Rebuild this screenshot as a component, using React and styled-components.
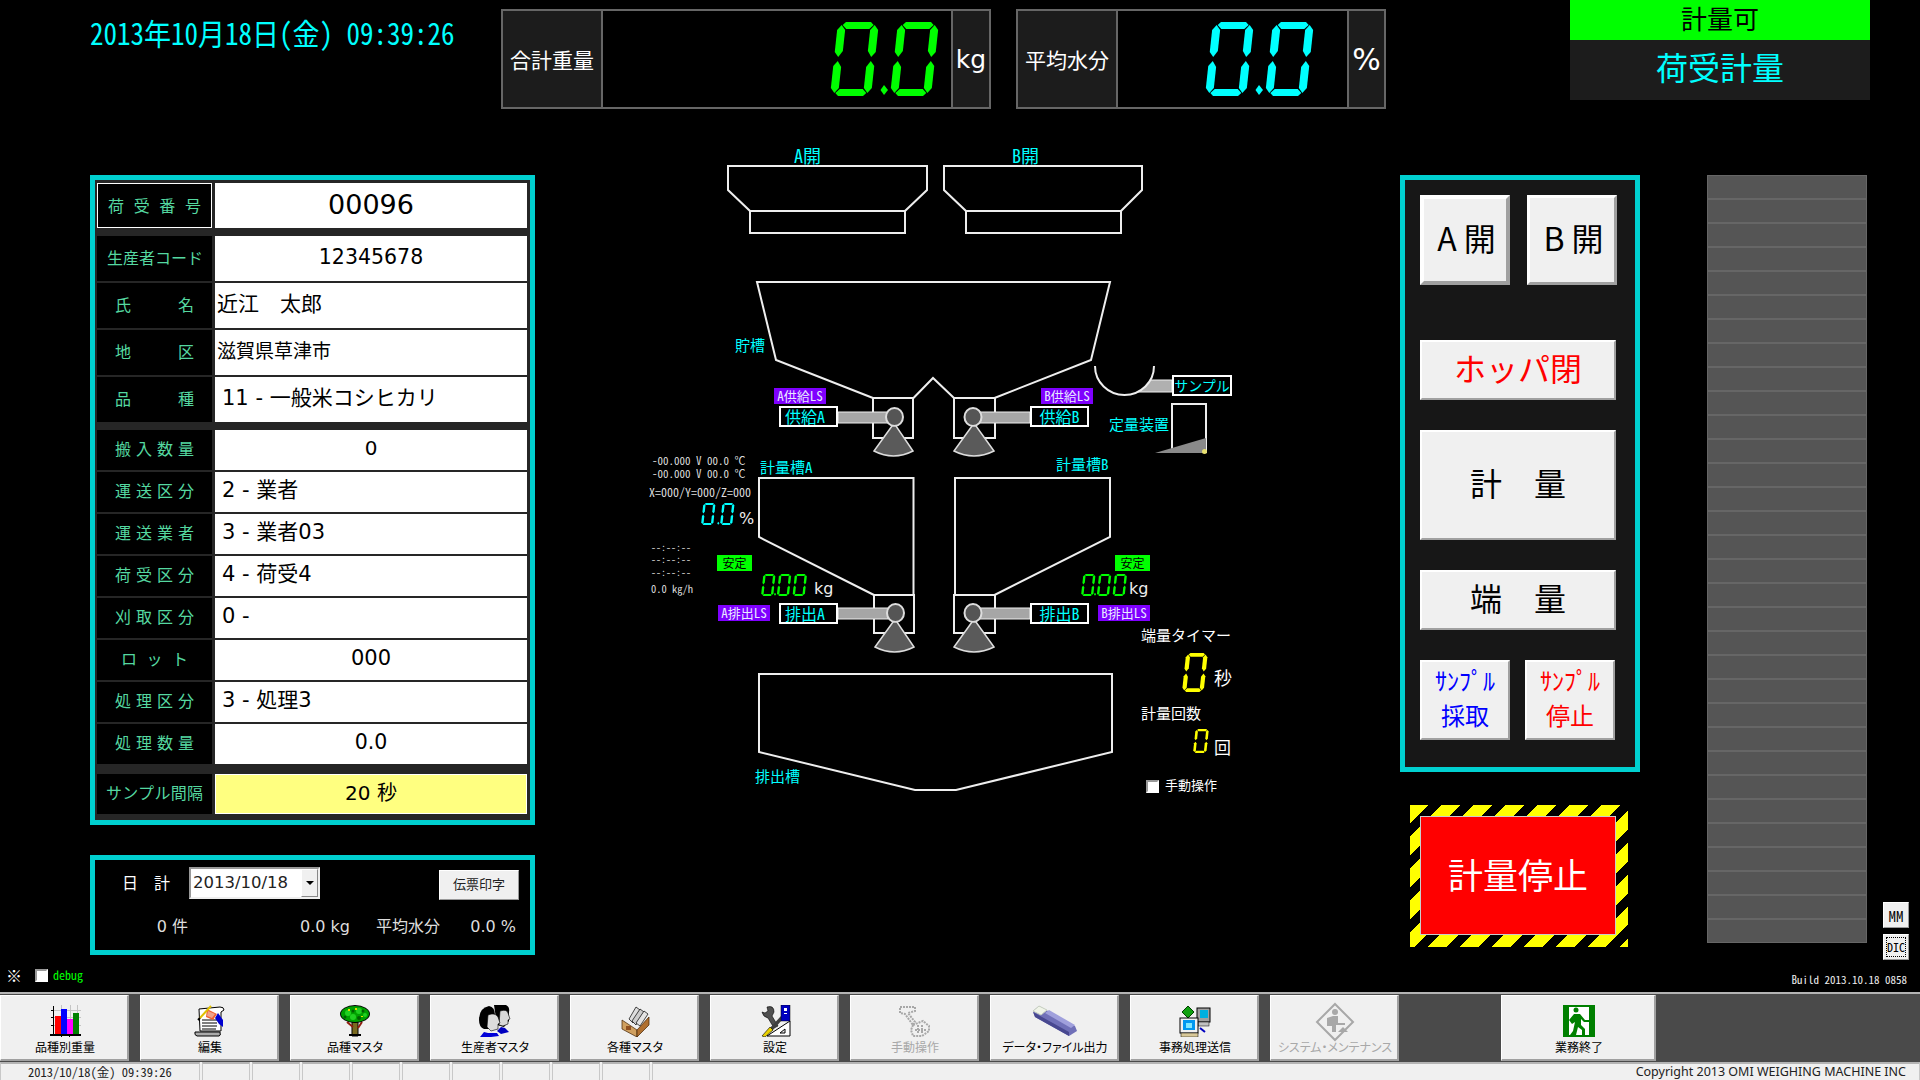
import React from "react";
import styled, { createGlobalStyle } from "styled-components";

const JP = `"Noto Sans CJK JP", sans-serif`;
const UI = `"DejaVu Sans", "Noto Sans CJK JP", sans-serif`;
const CYAN = "#00ffff";
const FRAME = "#00d0d0";

const Global = createGlobalStyle`
  html, body { margin: 0; background: #000; overflow: hidden; }
  #root { width: 1920px; height: 1080px; }
  * { box-sizing: border-box; }
`;

const Page = styled.div`
  width: 1920px; height: 1080px; background: #000; color: #fff;
  display: flex; flex-direction: column; font-family: ${JP};
  font-feature-settings: "hwid";
`;

/* ---------- header ---------- */
const Header = styled.header`
  height: 140px; flex: none; display: flex; align-items: flex-start; padding-left: 90px;
`;
const Clock = styled.div`
  width: 411px; padding-top: 14px; color: ${CYAN}; font-size: 30px; line-height: 36px; white-space: nowrap;
  & > span { display: inline-block; transform: scaleX(0.9); transform-origin: left center; }
`;
const Meter = styled.div`
  margin-top: 9px; margin-left: ${(p) => p.$ml}px; width: ${(p) => p.$w}px; height: 100px;
  display: grid; grid-template-columns: ${(p) => p.$cols};
  border: 2px solid #666;
`;
const MeterLabel = styled.div`
  background: #1c1c1c; border-right: 2px solid #666; display: flex; align-items: center; justify-content: center;
  font-size: 21px; color: #fff; white-space: nowrap;
`;
const MeterValue = styled.div`
  background: #000; border-right: 2px solid #666; display: flex; align-items: center; justify-content: flex-end;
  padding-right: ${(p) => p.$pr}px;
`;
const MeterUnit = styled.div`
  background: #1c1c1c; display: flex; align-items: center; justify-content: center;
  font-family: ${UI}; font-feature-settings: normal; font-size: ${(p) => p.$size}px; color: #fff;
`;
const StatusBlock = styled.div`
  margin-left: 184px; width: 300px; display: flex; flex-direction: column; background: #1c1c1c;
`;
const StatusReady = styled.div`
  height: 40px; background: #00ff00; color: #000; font-size: 26px; line-height: 35px; text-align: center;
`;
const StatusMode = styled.div`
  height: 60px; color: ${CYAN}; font-size: 32px; line-height: 53px; text-align: center;
`;

/* ---------- seven segment ---------- */
const SEG = {
  a: [[8, 0], [33, 0], [36, 3], [32, 7], [9, 7], [5, 3]],
  f: [[0, 8], [4, 3], [8, 8], [8, 29], [4, 35], [0, 30]],
  b: [[33, 8], [37, 3], [41, 8], [41, 30], [37, 35], [33, 29]],
  e: [[0, 44], [4, 39], [8, 45], [8, 66], [4, 71], [0, 66]],
  c: [[33, 45], [37, 39], [41, 44], [41, 66], [37, 71], [33, 66]],
  d: [[9, 67], [32, 67], [36, 71], [33, 74], [8, 74], [5, 71]],
  g: [[8, 34], [33, 34], [36, 37], [33, 40], [8, 40], [5, 37]],
};
const DIGITS = { 0: "abcdef", 1: "bc", 2: "abdeg", 3: "abcdg", 4: "bcfg", 5: "acdfg", 6: "acdefg", 7: "abc", 8: "abcdefg", 9: "abcdfg" };
const slant = ([x, y], ox) => `${x + ox + 8 * (1 - y / 74)},${y}`;

function SevenSeg({ value, height, color, pitch = 60, className }) {
  const chars = value.replace(".", "").split("");
  const dotAt = value.indexOf(".");
  const vbW = pitch * (chars.length - 1) + 49;
  return (
    <svg className={className} width={(vbW * height) / 74} height={height} viewBox={`0 0 ${vbW} 74`} style={{ display: "block", flex: "none" }}>
      {chars.map((c, i) =>
        DIGITS[c].split("").map((s) => (
          <polygon key={`${i}${s}`} points={SEG[s].map((pt) => slant(pt, i * pitch)).join(" ")} fill={color} />
        ))
      )}
      {dotAt > 0 && (
        <polygon
          points={`${pitch * dotAt - 6},63 ${pitch * dotAt - 2},68 ${pitch * dotAt - 6},73 ${pitch * dotAt - 9.5},68`}
          fill={color}
        />
      )}
    </svg>
  );
}

/* ---------- main ---------- */
const Main = styled.main`
  height: 825px; flex: none; display: flex; padding-left: 90px;
`;
const LeftColumn = styled.section`
  width: 445px; flex: none; padding-top: 35px; display: flex; flex-direction: column; gap: 30px;
`;
const EntryPanel = styled.div`
  height: 650px; border: 5px solid ${FRAME}; background: #262626; padding: 3px 3px 0 2px;
`;
const EntryRow = styled.div`
  display: grid; grid-template-columns: 115px 312px; column-gap: 3px;
  height: ${(p) => p.$h}px; margin-top: ${(p) => p.$mt}px;
`;
const EntryLabel = styled.div`
  background: #000; color: #55d8a0; font-size: 16px; line-height: ${(p) => p.$h - 3}px;
  padding: 0 ${(p) => p.$inset}px; text-align: justify; text-align-last: justify; white-space: nowrap;
  font-feature-settings: normal; overflow: hidden;
  border: ${(p) => (p.$focus ? "1px solid #fff" : "none")};
`;
const EntryValue = styled.div`
  background: ${(p) => (p.$yellow ? "#ffff80" : "#fff")}; color: #000; font-family: ${UI}; font-feature-settings: normal;
  border: ${(p) => (p.$yellow ? "1px solid #fff" : "none")};
  font-size: ${(p) => p.$size}px; line-height: ${(p) => (p.$h > 40 ? p.$h - 2 : p.$h - 4)}px; white-space: pre;
  text-align: ${(p) => (p.$center ? "center" : "left")}; padding-left: ${(p) => p.$indent}px;
`;

const SummaryPanel = styled.div`
  height: 100px; border: 5px solid ${FRAME}; background: #000; padding: 7px 0 0 27px;
`;
const SummaryTop = styled.div`
  display: flex; align-items: flex-start; height: 40px;
`;
const SummaryTitle = styled.div`
  width: 67px; margin-top: 3px; font-size: 16px; line-height: 24px; white-space: pre; color: #fff; font-feature-settings: normal;
`;
const DateCombo = styled.div`
  width: 131px; height: 32px; display: flex; background: #fff; border: 2px solid; border-color: #999 #eee #eee #999;
`;
const DateText = styled.div`
  flex: 1; color: #222; font-family: ${UI}; font-feature-settings: normal; font-size: 16.5px; line-height: 28px; padding-left: 2px; white-space: nowrap;
`;
const DateArrow = styled.div`
  width: 17px; background: #f0f0f0; border: 1px solid; border-color: #fff #888 #888 #fff;
  display: flex; align-items: center; justify-content: center;
  &::after { content: ""; border-left: 4px solid transparent; border-right: 4px solid transparent; border-top: 4px solid #000; }
`;
const SlipButton = styled.button`
  margin-left: 119px; margin-top: 3px; width: 80px; height: 30px; padding: 0 0 2px; background: #f0f0f0; color: #222;
  border: 1px solid; border-color: #fff #999 #999 #fff; font-family: ${JP}; font-size: 13px; line-height: 24px;
`;
const SummaryBottom = styled.div`
  margin-left: -27px; display: grid; grid-template-columns: 93px 162px 90px 76px; margin-top: 8px;
  font-family: ${UI}; font-feature-settings: normal; font-size: 16px; line-height: 24px; color: #ddd;
  & > span { text-align: right; white-space: nowrap; }
`;

/* ---------- diagram ---------- */
const Diagram = styled.section`
  position: relative; width: 620px; height: 670px; margin-left: 105px; flex: none;
  & > svg:first-child { display: block; }
`;
const CanvasText = styled.span`
  position: absolute; left: ${(p) => p.$x - 640}px; top: ${(p) => p.$y - 140}px; line-height: 1; white-space: pre;
`;
const ZoneLabel = styled(CanvasText)`color: ${CYAN}; font-size: ${(p) => p.$size || 15}px;`;
const WhiteLabel = styled(CanvasText)`color: #fff; font-size: ${(p) => p.$size || 15}px;`;
const TinyReadout = styled(CanvasText)`color: #ddd; font-size: ${(p) => p.$size || 11}px;`;
const UnitLabel = styled(CanvasText)`color: #eee; font-size: 16px; font-family: ${UI}; font-feature-settings: normal;`;
const LsBadge = styled(CanvasText)`
  width: 52px; height: 16px; background: #7f00ff; color: #e8e8ff; font-size: 13px; line-height: 15px; text-align: center;
`;
const StableBadge = styled(CanvasText)`
  width: 35px; height: 16px; background: #00ff00; color: #000; font-size: 12px; line-height: 16px; text-align: center;
`;
const ActuatorBox = styled(CanvasText)`
  width: ${(p) => p.$w || 59}px; height: ${(p) => p.$hh || 21}px; border: 2px solid #fff; background: #000; color: ${CYAN};
  font-size: ${(p) => p.$size || 16}px; line-height: 16px; text-align: ${(p) => (p.$left ? "left" : "center")};
  padding-left: ${(p) => (p.$left ? 4 : 0)}px;
`;
const PlacedDigits = styled(SevenSeg)`
  position: absolute; left: ${(p) => p.$x - 640}px; top: ${(p) => p.$y - 140}px;
`;
const ManualBox = styled.span`
  position: absolute; left: 506px; top: 640px; width: 13px; height: 13px; background: #fff; border: 2px solid; border-color: #999 #fff #fff #999;
`;

const Line = styled.g`
  fill: none; stroke: #eee; stroke-width: 2;
`;

function Valve({ box, boxY, boxH, rodX, rodW, rodY, cx, cy, fanTop, fanL, fanR, fanY }) {
  const mid = (fanL + fanR) / 2;
  return (
    <g>
      <Line><rect x={box} y={boxY} width={fanR - fanL + 1} height={boxH} /></Line>
      <rect x={rodX} y={rodY} width={rodW} height={11} fill="#a6a6a6" stroke="#eee" strokeWidth="1" />
      <ellipse cx={cx} cy={cy} rx="8.5" ry="9" fill="#555" stroke="#ddd" strokeWidth="2" />
      <path
        d={`M${fanTop - 2},${cy + 9} L${fanL},${fanY} Q${mid},${fanY + 10} ${fanR},${fanY} L${fanTop + 2},${cy + 9} Z`}
        fill="#5a5a5a" stroke="#ddd" strokeWidth="1.5"
      />
    </g>
  );
}

function PlantDrawing() {
  return (
    <svg width="620" height="670" viewBox="640 140 620 670">
      <Line>
        <polygon points="728,166 927,166 927,190 905,211 905,233 750,233 750,211 728,190" />
        <line x1="750" y1="211" x2="905" y2="211" />
        <polygon points="944,166 1142,166 1142,190 1121,211 1121,233 966,233 966,211 944,190" />
        <line x1="966" y1="211" x2="1121" y2="211" />
        <polyline points="873,398 776,360 757,282 1110,282 1091,360 994.5,398" />
        <polyline points="913.5,398 933,378 954,398" />
        <polyline points="874,595 759,537 759,478 913.5,478 913.5,595" />
        <polyline points="994.5,595 1110,537 1110,478 955,478 955,595" />
        <polygon points="759,674 1112,674 1112,752 956,790 915,790 759,752" />
        <path d="M1172,453 L1172,404 L1206,404 L1206,453" />
      </Line>
      <Valve box={873} boxY={398} boxH={40} rodX={838} rodW={50} rodY={412} cx={894.5} cy={417} fanTop={894} fanL={874} fanR={913} fanY={451} />
      <Valve box={954} boxY={398} boxH={40} rodX={980} rodW={50} rodY={412} cx={973} cy={417} fanTop={974} fanL={954} fanR={994} fanY={451} />
      <Valve box={874} boxY={595} boxH={38} rodX={838} rodW={50} rodY={608} cx={895.5} cy={613} fanTop={895} fanL={875} fanR={914} fanY={647} />
      <Valve box={954} boxY={595} boxH={38} rodX={980} rodW={50} rodY={608} cx={973} cy={613} fanTop={974} fanL={954} fanR={994} fanY={647} />
      <rect x="1125" y="380" width="47" height="12" fill="#b0b0b0" stroke="#eee" strokeWidth="1" />
      <path d="M1095,366 A29.5,29 0 0 0 1154,366 Z" fill="#000" stroke="none" />
      <path d="M1095,366 A29.5,29 0 0 0 1154,366" fill="none" stroke="#eee" strokeWidth="2" />
      <polygon points="1155,453 1206,438 1206,453" fill="#8a8a8a" />
      <circle cx="1204.5" cy="451.5" r="2.5" fill="#e8e070" />
    </svg>
  );
}

/* ---------- right ---------- */
const RightColumn = styled.section`
  width: 240px; margin-left: 140px; flex: none; padding-top: 35px; display: flex; flex-direction: column;
`;
const ControlPanel = styled.div`
  height: 597px; border: 5px solid ${FRAME}; background: #171717; padding: 15px;
  display: flex; flex-direction: column;
`;
const ButtonPair = styled.div`
  display: flex; gap: ${(p) => p.$gap}px; margin-top: ${(p) => p.$mt || 0}px;
`;
const ControlButton = styled.button`
  width: ${(p) => p.$w || 196}px; height: ${(p) => p.$h}px; margin-top: ${(p) => p.$mt || 0}px; flex: none;
  padding: 0 0 5px ${(p) => p.$pl || 0}px;
  background: #f0f0f0; color: ${(p) => p.$color || "#000"}; font-family: ${JP};
  font-size: ${(p) => p.$size || 32}px; line-height: ${(p) => p.$lh || 1.2};
  border-style: solid; border-width: ${(p) => p.$bevel || 2}px; border-color: #fff #a0a0a0 #a0a0a0 #fff;
  white-space: pre; font-feature-settings: ${(p) => (p.$narrow ? '"hwid"' : "normal")};
`;
const StopFrame = styled.div`
  margin-top: 33px; margin-left: 10px; width: 218px; height: 142px; padding: 11px 12px 12px 10px;
  background: repeating-linear-gradient(135deg, #ffff00 0 13px, #000 13px 22.6px);
`;
const StopButton = styled.button`
  width: 100%; height: 100%; padding: 0 0 4px; background: #ff0000; color: #fff; border: 1px solid #ccc;
  font-family: ${JP}; font-size: 35px;
`;
const Gauge = styled.div`
  margin-left: 67px; margin-top: 35px; width: 160px; height: 768px; flex: none; background: #555; border: 1px solid #666;
  display: flex; flex-direction: column; overflow: hidden;
`;
const GaugeSegment = styled.div`
  height: 24px; flex: none; background: #555; border-bottom: 2px solid #666;
`;
const SideButtons = styled.div`
  margin-left: 16px; margin-top: 762px; width: 26px; flex: none; display: flex; flex-direction: column; gap: 6px;
`;
const SideButton = styled.button`
  width: 26px; height: 26px; padding: 0; background: #f0f0f0; color: #000; font-family: ${JP}; font-size: ${(p) => p.$size}px; line-height: 1;
  border: 1px solid; border-color: #fff #999 #999 #fff; outline: ${(p) => (p.$focus ? "1px dotted #000" : "none")};
  outline-offset: -4px; font-feature-settings: "hwid";
`;

/* ---------- foot ---------- */
const FootRow = styled.div`
  height: 27px; flex: none; display: flex; align-items: center; padding: 0 13px 0 6px;
`;
const FootLeft = styled.div`
  display: flex; align-items: center; margin-bottom: 8px;
`;
const Mark = styled.span`color: #fff; font-size: 16px; width: 29px; font-feature-settings: normal;`;
const DebugBox = styled.span`
  width: 13px; height: 13px; background: #fff; border: 2px solid; border-color: #999 #fff #fff #999; margin-right: 5px; margin-top: 2px;
`;
const DebugText = styled.span`color: #00ff00; font-size: 12px;`;
const BuildText = styled.span`margin-left: auto; color: #eee; font-size: 11px;`;

/* ---------- toolbar ---------- */
const Toolbar = styled.nav`
  height: 70px; flex: none; background: #4a4a4a; border-top: 2px solid #b4b4b4; padding-top: 1px; display: flex;
`;
const ToolButton = styled.button`
  width: ${(p) => p.$w || 129}px; margin-left: ${(p) => p.$ml ?? 11}px; height: 66px; flex: none; padding: 9px 0 0 2px;
  background: #f0f0f0; border-style: solid; border-width: 1px 2px 2px 1px; border-color: #fff #a0a0a0 #a0a0a0 #fff;
  display: flex; flex-direction: column; align-items: center; gap: 3px;
  color: ${(p) => (p.disabled ? "#a8a8a8" : "#000")}; font-family: ${JP}; font-size: 12px; line-height: 13px;
  font-feature-settings: "palt"; white-space: nowrap;
`;
const StatusBar = styled.footer`
  height: 18px; flex: none; background: #f0f0f0; display: flex; gap: 2px; color: #222;
`;
const StatusCell = styled.div`
  width: ${(p) => p.$w}px; flex: ${(p) => (p.$grow ? 1 : "none")}; border-top: 2px solid #b4b4b4; border-left: 1px solid #c8c8c8; border-right: 1px solid #c8c8c8;
  font-size: 12.5px; line-height: 15px; white-space: nowrap; display: flex; padding: 0 13px 0 27px;
  justify-content: ${(p) => (p.$grow ? "flex-end" : "flex-start")};
`;
const Copyright = styled.span`font-family: "Noto Sans", sans-serif; font-feature-settings: normal; font-size: 12.5px;`;

/* ---------- icons ---------- */
const Ico = ({ children }) => <svg width="32" height="32" viewBox="0 0 32 32">{children}</svg>;
const ChartIcon = () => (
  <Ico>
    <g fill="#c4c4c4"><rect x="3" y="5" width="29" height="1" /><rect x="3" y="12" width="29" height="1" /><rect x="3" y="20" width="29" height="1" /><rect x="12" y="0" width="1" height="29" /><rect x="21" y="0" width="1" height="29" /><rect x="28" y="0" width="1" height="29" /></g>
    <rect x="6" y="11" width="6" height="18" fill="#ff0000" />
    <rect x="12" y="4" width="6" height="25" fill="#0000ff" />
    <rect x="18" y="14" width="6" height="15" fill="#ff00ff" />
    <rect x="24" y="8" width="6" height="21" fill="#008000" />
    <rect x="4" y="1" width="1" height="30" fill="#000" />
    <rect x="1" y="29" width="31" height="2" fill="#000" />
    <g fill="#000"><rect x="2" y="5" width="2" height="1" /><rect x="2" y="12" width="2" height="1" /><rect x="2" y="20" width="2" height="1" /><rect x="12" y="31" width="1" height="1" /><rect x="20" y="31" width="1" height="1" /></g>
  </Ico>
);
const ScrollIcon = () => (
  <Ico>
    <path d="M5,4 L26,2 Q30,2 30,5 L27,7 L27,26 L6,26 Z" fill="#fff" stroke="#000" />
    <path d="M1,27 L26,27 Q27,31 25,31 L3,31 Q0,30 1,27 Z" fill="#aaa" stroke="#000" />
    <g stroke="#000"><line x1="8" y1="15" x2="23" y2="15" /><line x1="8" y1="18" x2="23" y2="18" /><line x1="8" y1="21" x2="23" y2="21" /><line x1="8" y1="24" x2="22" y2="24" /></g>
    <polygon points="13,4 23,9 19,15 12,12" fill="#f06030" />
    <polygon points="14,6 21,9 18,13 13,11" fill="#f0c0b0" opacity="0.7" />
    <polygon points="24,8 29,15 29,22 25,19 21,13" fill="#0000d0" />
    <line x1="6" y1="13" x2="17" y2="1" stroke="#e0c000" strokeWidth="2" />
    <line x1="6" y1="13" x2="4" y2="15" stroke="#000" strokeWidth="2" />
  </Ico>
);
const TreeIcon = () => (
  <Ico>
    <polygon points="13,17 19,17 19,31 13,31" fill="#7a6a20" stroke="#000" strokeWidth="1" />
    <path d="M8,17 L14,22 M23,17 L19,23" stroke="#902010" strokeWidth="2" />
    <rect x="10" y="29" width="12" height="2" fill="#000" />
    <ellipse cx="16" cy="9" rx="15" ry="9" fill="#000" />
    <ellipse cx="16" cy="9" rx="14" ry="8" fill="#00a000" />
    <g fill="#20d020"><circle cx="9" cy="8" r="3" /><circle cx="20" cy="6" r="3" /><circle cx="26" cy="10" r="2" /><circle cx="14" cy="12" r="3" /></g>
    <g fill="#006000"><circle cx="14" cy="6" r="1.5" /><circle cx="24" cy="6" r="1.5" /><circle cx="6" cy="12" r="1.5" /><circle cx="20" cy="13" r="2" /></g>
    <g fill="#e0e000"><rect x="9" y="4" width="2" height="2" /><rect x="16" y="3" width="2" height="2" /><rect x="22" y="11" width="2" height="1" /></g>
  </Ico>
);
const PeopleIcon = () => (
  <Ico>
    <path d="M15,0 L27,0 Q31,2 30,7 L30,16 L25,22 L18,20 Z" fill="#000" />
    <path d="M21,6 Q28,4 29,8 L31,14 L29,15 L29,19 L24,21 L20,20 Z" fill="#d8d8d8" stroke="#000" strokeWidth="0.6" />
    <path d="M18,26 L22,22 L26,23 L30,27 L22,29 Z" fill="#0000c0" />
    <path d="M10,1 Q0,3 0,15 Q0,22 5,24 L13,24 L16,10 Q16,2 10,1 Z" fill="#000" />
    <path d="M9,10 Q16,7 19,12 L21,18 L19,19 L19,24 L12,26 L8,22 Z" fill="#dcdcdc" stroke="#000" strokeWidth="0.6" />
    <path d="M1,32 L5,27 L9,28 L13,28 L18,28 L20,31 L12,32 Z" fill="#0000d8" />
  </Ico>
);
const BoxIcon = () => (
  <Ico>
    <g stroke="#000" strokeWidth="0.7"><polygon points="10,14 17,2 21,5 14,18" fill="#ddd" /><polygon points="13,16 21,4 25,7 17,20" fill="#ccc" /><polygon points="17,18 25,6 29,9 21,21" fill="#e4e4e4" /></g>
    <polygon points="3,15 18,25 18,32 3,24" fill="#d0a060" stroke="#402000" strokeWidth="0.7" />
    <polygon points="18,25 30,12 30,20 18,32" fill="#b07030" stroke="#402000" strokeWidth="0.7" />
    <rect x="7" y="21" width="5" height="4" fill="#905020" />
  </Ico>
);
const ToolsIcon = () => (
  <Ico>
    <polygon points="31,16 31,31 8,31" fill="#fff" stroke="#000" />
    <polygon points="26,24 26,28 21,28" fill="#f0f0f0" stroke="#000" />
    <path d="M8,2 Q15,0 15,7 L13,11 L19,21 L15,23 L9,13 Q4,12 3,7 L6,8 L9,6 Z" fill="#505050" stroke="#000" strokeWidth="0.6" />
    <polygon points="22,11 10,24 13,26 24,14" fill="#404040" />
    <polygon points="11,22 3,31 6,32 14,25" fill="#e8d000" stroke="#000" strokeWidth="0.6" />
    <rect x="22" y="0" width="9" height="16" fill="#0000c0" stroke="#000" strokeWidth="0.5" />
    <rect x="25" y="3" width="3" height="3" fill="#fff" /><rect x="25" y="8" width="3" height="1" fill="#fff" />
  </Ico>
);
const HandIcon = () => (
  <Ico>
    <g fill="none" stroke="#a8a8a8" strokeWidth="2" strokeDasharray="2 1">
      <path d="M1,2 L16,2 L16,6 L9,8 L16,17 L14,20 L6,9 L1,8 Z" />
      <path d="M14,20 L24,16 L30,21 L30,26 L23,31 L14,31 L12,25 Z" />
      <path d="M19,20 L19,29 M23,20 L23,29 M16,25 L27,25" />
    </g>
  </Ico>
);
const UsbIcon = () => (
  <svg width="48" height="32" viewBox="0 0 48 32">
    <polygon points="2,6 8,1 44,21 46,26 38,31 4,12" fill="#7070b8" />
    <polygon points="2,6 8,1 16,5 10,10" fill="#f0f4e8" stroke="#c8d0c0" />
    <polygon points="14,8 18,5 44,20 40,23" fill="#a0a0dc" />
    <polygon points="4,12 38,31 38,27 2,7" fill="#484890" />
  </svg>
);
const PcIcon = () => (
  <Ico>
    <rect x="18" y="3" width="13" height="14" fill="#a0a0a0" stroke="#000" />
    <rect x="21" y="5" width="8" height="8" fill="#00b0e0" />
    <rect x="19" y="17" width="11" height="4" fill="#c0c0c0" stroke="#000" strokeWidth="0.5" />
    <polygon points="3,7 9,1 15,7 9,13" fill="#10a010" stroke="#004000" />
    <rect x="1" y="13" width="18" height="15" fill="#f0f0f0" stroke="#000" />
    <rect x="4" y="15" width="12" height="10" fill="#0098f0" />
    <rect x="7" y="18" width="6" height="5" fill="#80e8ff" />
    <rect x="2" y="28" width="17" height="4" fill="#d8c898" stroke="#000" strokeWidth="0.5" />
    <path d="M21,23 L26,27" stroke="#0000c0" strokeWidth="2" />
  </Ico>
);
const MaintenanceIcon = () => (
  <svg width="40" height="40" viewBox="0 0 40 40" style={{ marginTop: -3, marginBottom: -5 }}>
    <polygon points="20,2 38,20 20,38 2,20" fill="none" stroke="#a8a8a8" strokeWidth="2" />
    <circle cx="20" cy="10" r="3" fill="#a8a8a8" />
    <path d="M12,16 L18,14 L23,14 L23,21 L30,21 L30,23 L21,23 L21,30 L17,30 L17,24 L12,24 Z" fill="#a8a8a8" />
    <polygon points="23,30 28,25 33,30" fill="#a8a8a8" />
  </svg>
);
const ExitIcon = () => (
  <Ico>
    <rect x="0" y="0" width="32" height="32" fill="#008000" />
    <rect x="6" y="2" width="20" height="28" fill="#fff" />
    <circle cx="13" cy="5" r="2.5" fill="#008000" />
    <path d="M11,9 L17,9 L22,15 L28,15 L28,17 L21,17 L18,14 L18,20 L22,24 L22,30 L19,30 L19,25 L15,22 L13,30 L7,30 L10,26 L12,17 L9,19 L6,15 Z" fill="#008000" />
  </Ico>
);

/* ---------- data ---------- */
const groupA = [
  { label: "荷受番号", value: "00096", h: 45, mt: 0, inset: 10, size: 27, center: true, focus: true },
  { label: "生産者コード", value: "12345678", h: 45, mt: 8, inset: 10, size: 20.5, center: true },
  { label: "氏名", value: "近江　太郎", h: 45, mt: 2, inset: 18, size: 21, indent: 2 },
  { label: "地区", value: "滋賀県草津市", h: 45, mt: 2, inset: 18, size: 19, indent: 2 },
  { label: "品種", value: "11 - 一般米コシヒカリ", h: 45, mt: 2, inset: 18, size: 21, indent: 7 },
  { label: "搬入数量", value: "0", h: 40, mt: 8, inset: 18, size: 20, center: true },
  { label: "運送区分", value: "2 - 業者", h: 40, mt: 2, inset: 18, size: 21, indent: 7 },
  { label: "運送業者", value: "3 - 業者03", h: 40, mt: 2, inset: 18, size: 21, indent: 7 },
  { label: "荷受区分", value: "4 - 荷受4", h: 40, mt: 2, inset: 18, size: 21, indent: 7 },
  { label: "刈取区分", value: "0 -", h: 40, mt: 2, inset: 18, size: 21, indent: 7 },
  { label: "ロット", value: "000", h: 40, mt: 2, inset: 24, size: 21, center: true },
  { label: "処理区分", value: "3 - 処理3", h: 40, mt: 2, inset: 18, size: 21, indent: 7 },
  { label: "処理数量", value: "0.0", h: 40, mt: 2, inset: 18, size: 20.5, center: true },
  { label: "サンプル間隔", value: "20 秒", h: 40, mt: 10, inset: 9, size: 20, center: true, yellow: true },
];

const tools = [
  { label: "品種別重量", icon: <ChartIcon />, ml: 0 },
  { label: "編集", icon: <ScrollIcon />, w: 139 },
  { label: "品種マスタ", icon: <TreeIcon /> },
  { label: "生産者マスタ", icon: <PeopleIcon /> },
  { label: "各種マスタ", icon: <BoxIcon /> },
  { label: "設定", icon: <ToolsIcon /> },
  { label: "手動操作", icon: <HandIcon />, disabled: true },
  { label: "データ・ファイル出力", icon: <UsbIcon /> },
  { label: "事務処理送信", icon: <PcIcon /> },
  { label: "システム・メンテナンス", icon: <MaintenanceIcon />, disabled: true },
  { label: "業務終了", icon: <ExitIcon />, w: 155, ml: 102 },
];

export default function App() {
  return (
    <Page>
      <Global />
      <Header>
        <Clock><span>2013年10月18日(金) 09:39:26</span></Clock>
        <Meter $ml={0} $w={490} $cols="100px 350px 36px">
          <MeterLabel>合計重量</MeterLabel>
          <MeterValue $pr={12}><SevenSeg value="0.0" height={74} color="#00ff00" /></MeterValue>
          <MeterUnit $size={25}>kg</MeterUnit>
        </Meter>
        <Meter $ml={25} $w={370} $cols="100px 231px 35px">
          <MeterLabel>平均水分</MeterLabel>
          <MeterValue $pr={33}><SevenSeg value="0.0" height={74} color="#00ffff" /></MeterValue>
          <MeterUnit $size={30}>%</MeterUnit>
        </Meter>
        <StatusBlock>
          <StatusReady>計量可</StatusReady>
          <StatusMode>荷受計量</StatusMode>
        </StatusBlock>
      </Header>

      <Main>
        <LeftColumn>
          <EntryPanel>
            {groupA.map((r) => (
              <EntryRow key={r.label} $h={r.h} $mt={r.mt}>
                <EntryLabel $h={r.h} $inset={r.inset} $focus={r.focus}>{r.label}</EntryLabel>
                <EntryValue $h={r.h} $size={r.size} $center={r.center} $indent={r.indent || 0} $yellow={r.yellow}>{r.value}</EntryValue>
              </EntryRow>
            ))}
          </EntryPanel>
          <SummaryPanel>
            <SummaryTop>
              <SummaryTitle>日　計</SummaryTitle>
              <DateCombo>
                <DateText>2013/10/18</DateText>
                <DateArrow />
              </DateCombo>
              <SlipButton>伝票印字</SlipButton>
            </SummaryTop>
            <SummaryBottom>
              <span>0 件</span>
              <span>0.0 kg</span>
              <span>平均水分</span>
              <span>0.0 %</span>
            </SummaryBottom>
          </SummaryPanel>
        </LeftColumn>

        <Diagram>
          <PlantDrawing />
          <ZoneLabel $x={794} $y={146} $size={18}>A開</ZoneLabel>
          <ZoneLabel $x={1012} $y={146} $size={18}>B開</ZoneLabel>
          <ZoneLabel $x={735} $y={337}>貯槽</ZoneLabel>
          <LsBadge $x={774} $y={388}>A供給LS</LsBadge>
          <LsBadge $x={1041} $y={388}>B供給LS</LsBadge>
          <ActuatorBox $x={779} $y={406} $left>供給A</ActuatorBox>
          <ActuatorBox $x={1030} $y={406}>供給B</ActuatorBox>
          <ActuatorBox $x={1172} $y={375} $w={60} $size={14}>サンプル</ActuatorBox>
          <ZoneLabel $x={1109} $y={416}>定量装置</ZoneLabel>

          <TinyReadout $x={652} $y={455}>-00.000 V 00.0 ℃</TinyReadout>
          <TinyReadout $x={652} $y={468}>-00.000 V 00.0 ℃</TinyReadout>
          <TinyReadout $x={649} $y={486} $size={12}>X=000/Y=000/Z=000</TinyReadout>
          <PlacedDigits $x={701} $y={503} value="0.0" height={22} pitch={64} color="#00ffff" />
          <UnitLabel $x={739} $y={511}>%</UnitLabel>
          <TinyReadout $x={651} $y={542} $size={10}>--:--:--</TinyReadout>
          <TinyReadout $x={651} $y={554} $size={10}>--:--:--</TinyReadout>
          <TinyReadout $x={651} $y={567} $size={10}>--:--:--</TinyReadout>
          <TinyReadout $x={651} $y={584} $size={10.5}>0.0 kg/h</TinyReadout>

          <ZoneLabel $x={760} $y={459}>計量槽A</ZoneLabel>
          <ZoneLabel $x={1056} $y={456}>計量槽B</ZoneLabel>
          <StableBadge $x={717} $y={555}>安定</StableBadge>
          <StableBadge $x={1115} $y={555}>安定</StableBadge>
          <PlacedDigits $x={761} $y={574} value="0.00" height={22} pitch={53} color="#00ff00" />
          <PlacedDigits $x={1081} $y={574} value="0.00" height={22} pitch={53} color="#00ff00" />
          <UnitLabel $x={814} $y={581}>kg</UnitLabel>
          <UnitLabel $x={1129} $y={581}>kg</UnitLabel>
          <LsBadge $x={718} $y={605}>A排出LS</LsBadge>
          <LsBadge $x={1098} $y={605}>B排出LS</LsBadge>
          <ActuatorBox $x={779} $y={603} $left>排出A</ActuatorBox>
          <ActuatorBox $x={1030} $y={603}>排出B</ActuatorBox>

          <WhiteLabel $x={1141} $y={627}>端量タイマー</WhiteLabel>
          <PlacedDigits $x={1182} $y={653} value="0" height={39} color="#ffff00" />
          <WhiteLabel $x={1214} $y={668} $size={18}>秒</WhiteLabel>
          <WhiteLabel $x={1141} $y={705}>計量回数</WhiteLabel>
          <PlacedDigits $x={1193} $y={729} value="0" height={24} color="#ffff00" />
          <WhiteLabel $x={1214} $y={738} $size={17}>回</WhiteLabel>
          <ZoneLabel $x={755} $y={768}>排出槽</ZoneLabel>
          <ManualBox />
          <WhiteLabel $x={1165} $y={778} $size={13}>手動操作</WhiteLabel>
        </Diagram>

        <RightColumn>
          <ControlPanel>
            <ButtonPair $gap={17}>
              <ControlButton $w={90} $h={90} $bevel={4} $pl={3}>A 開</ControlButton>
              <ControlButton $w={90} $h={90} $bevel={3} $pl={3}>B 開</ControlButton>
            </ButtonPair>
            <ControlButton $h={60} $mt={55} $color="#ff0000">ホッパ閉</ControlButton>
            <ControlButton $h={110} $mt={30}>計　量</ControlButton>
            <ControlButton $h={60} $mt={30}>端　量</ControlButton>
            <ButtonPair $gap={15} $mt={30}>
              <ControlButton $w={90} $h={80} $size={24} $lh={1.45} $color="#0000ff" $narrow>{"ｻﾝﾌﾟﾙ\n採取"}</ControlButton>
              <ControlButton $w={90} $h={80} $size={24} $lh={1.45} $color="#ff0000" $narrow>{"ｻﾝﾌﾟﾙ\n停止"}</ControlButton>
            </ButtonPair>
          </ControlPanel>
          <StopFrame>
            <StopButton>計量停止</StopButton>
          </StopFrame>
        </RightColumn>

        <Gauge>
          {Array.from({ length: 32 }, (_, i) => <GaugeSegment key={i} />)}
        </Gauge>
        <SideButtons>
          <SideButton $size={15}>MM</SideButton>
          <SideButton $size={12} $focus>DIC</SideButton>
        </SideButtons>
      </Main>

      <FootRow>
        <FootLeft>
          <Mark>※</Mark>
          <DebugBox />
          <DebugText>debug</DebugText>
        </FootLeft>
        <BuildText>Build 2013.10.18 0858</BuildText>
      </FootRow>

      <Toolbar>
        {tools.map((t) => (
          <ToolButton key={t.label} $w={t.w} $ml={t.ml} disabled={t.disabled}>
            {t.icon}
            {t.label}
          </ToolButton>
        ))}
      </Toolbar>

      <StatusBar>
        <StatusCell $w={200}>2013/10/18(金) 09:39:26</StatusCell>
        {Array.from({ length: 9 }, (_, i) => <StatusCell key={i} $w={48} />)}
        <StatusCell $grow><Copyright>Copyright 2013 OMI WEIGHING MACHINE INC</Copyright></StatusCell>
      </StatusBar>
    </Page>
  );
}
